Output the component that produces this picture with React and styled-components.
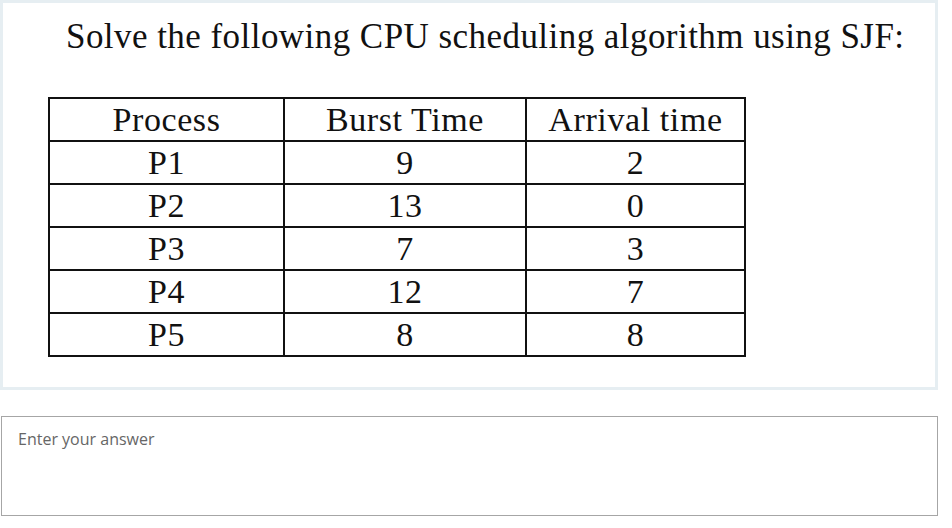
import React from "react";
import styled, { createGlobalStyle } from "styled-components";

const GlobalStyle = createGlobalStyle`
  html, body {
    margin: 0;
    padding: 0;
    background: #ffffff;
  }
`;

const Page = styled.div`
  width: 952px;
  display: flex;
  flex-direction: column;
`;

const ImageFrame = styled.div`
  width: 938px;
  height: 390px;
  box-sizing: border-box;
  border: 3px solid #e6eef2;
  background: #ffffff;
  display: flex;
  flex-direction: column;
  align-items: flex-start;
`;

const Title = styled.h1`
  margin: 0;
  padding: 14px 0 0 63px;
  font-family: "Liberation Serif", "Times New Roman", serif;
  font-weight: normal;
  font-size: 35px;
  letter-spacing: 0.45px;
  line-height: 40px;
  color: #111;
  white-space: nowrap;
`;

const Table = styled.table`
  margin: 40px 0 0 45px;
  border-collapse: collapse;
  table-layout: fixed;
  font-family: "Liberation Serif", "Times New Roman", serif;
  font-size: 34px;
  letter-spacing: 0.6px;
  color: #111;
`;

const Cell = styled.td`
  width: ${(p) => p.w}px;
  height: 41px;
  padding: 0;
  border: 2px solid #111;
  text-align: center;
  vertical-align: middle;
  line-height: 41px;
  white-space: nowrap;
`;

const AnswerBox = styled.textarea`
  margin: 26px 0 0 1px;
  width: 937px;
  height: 100px;
  box-sizing: border-box;
  border: 1px solid #a6a6a6;
  padding: 11px 16px;
  resize: none;
  font-family: "Open Sans", "Noto Sans", sans-serif;
  font-size: 16px;
  color: #333;
  outline: none;
  &::placeholder {
    color: #666;
  }
`;

const widths = [233, 240, 217];
const header = ["Process", "Burst Time", "Arrival time"];
const rows = [
  ["P1", "9", "2"],
  ["P2", "13", "0"],
  ["P3", "7", "3"],
  ["P4", "12", "7"],
  ["P5", "8", "8"],
];

const App = () => (
  <>
    <GlobalStyle />
    <Page>
      <ImageFrame>
        <Title>Solve the following CPU scheduling algorithm using SJF:</Title>
        <Table>
          <tbody>
            <tr>
              {header.map((h, i) => (
                <Cell key={h} w={widths[i]}>
                  {h}
                </Cell>
              ))}
            </tr>
            {rows.map((r) => (
              <tr key={r[0]}>
                {r.map((v, i) => (
                  <Cell key={i} w={widths[i]}>
                    {v}
                  </Cell>
                ))}
              </tr>
            ))}
          </tbody>
        </Table>
      </ImageFrame>
      <AnswerBox placeholder="Enter your answer" />
    </Page>
  </>
);

export default App;
